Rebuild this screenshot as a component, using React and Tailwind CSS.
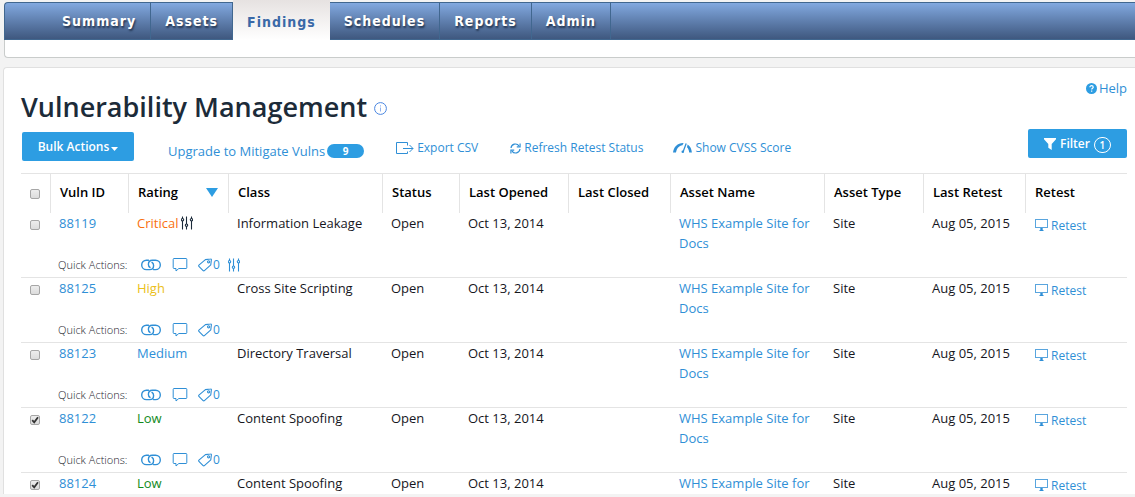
import { useState } from 'react';

const tabs = ['Summary', 'Assets', 'Findings', 'Schedules', 'Reports', 'Admin'];

const columns = [
  { label: 'Vuln ID', width: 'w-[78px]' },
  { label: 'Rating', width: 'w-[100px]', sorted: true },
  { label: 'Class', width: 'w-[154px]' },
  { label: 'Status', width: 'w-[77px]' },
  { label: 'Last Opened', width: 'w-[109px]' },
  { label: 'Last Closed', width: 'w-[102px]' },
  { label: 'Asset Name', width: '' },
  { label: 'Asset Type', width: 'w-[99px]' },
  { label: 'Last Retest', width: 'w-[102px]' },
  { label: 'Retest', width: 'w-[102px]' },
];

const ratingColors = {
  Critical: 'text-[#f9700f]',
  High: 'text-[#ebc01a]',
  Medium: 'text-[#2e8fd8]',
  Low: 'text-[#128a1c]',
};

const vulns = [
  { id: '88119', rating: 'Critical', name: 'Information Leakage', custom: true },
  { id: '88125', rating: 'High', name: 'Cross Site Scripting' },
  { id: '88123', rating: 'Medium', name: 'Directory Traversal' },
  { id: '88122', rating: 'Low', name: 'Content Spoofing' },
  { id: '88124', rating: 'Low', name: 'Content Spoofing' },
];

function SlidersIcon({ className }) {
  return (
    <svg viewBox="0 0 12 14" className={`w-3 h-[14px] ${className}`} fill="none" stroke="currentColor" strokeWidth="1.1" aria-hidden="true">
      <path d="M1.5 0.5v2M1.5 5v8.5M5.5 0.5v7.5M5.5 10.5v3M10.5 0.5v2M10.5 5v8.5" />
      <circle cx="1.5" cy="3.7" r="1.2" />
      <circle cx="5.5" cy="9.2" r="1.2" />
      <circle cx="10.5" cy="3.7" r="1.2" />
    </svg>
  );
}

function LinkIcon() {
  return (
    <svg viewBox="0 0 20 12" className="w-5 h-3" fill="none" stroke="currentColor" strokeWidth="1.4" strokeLinecap="round" aria-hidden="true">
      <path d="M7.5 1.2H5.4a4.7 4.7 0 0 0 0 9.4h3.2c2.4 0 4-1.8 4-4.2 0-1.200-.6-2.300-1.600-3" />
      <path d="M12.5 10.600h2.100a4.7 4.7 0 0 0 0-9.400h-3.200c-2.4 0-4 1.8-4 4.2 0 1.200.6 2.300 1.600 3" />
    </svg>
  );
}

function CommentIcon() {
  return (
    <svg viewBox="0 0 16 14" className="w-4 h-[14px]" fill="none" stroke="currentColor" strokeLinejoin="round" aria-hidden="true">
      <path d="M2 .5h12a.8.8 0 0 1 .8.8v8.4a.8.8 0 0 1-.8.8H6.8L4 13v-2.5H2a.8.8 0 0 1-.8-.8V1.3A.8.8 0 0 1 2 .5z" />
    </svg>
  );
}

function TagIcon() {
  return (
    <svg viewBox="0 0 14 14" className="w-[14px] h-[14px]" fill="none" stroke="currentColor" strokeWidth="1.1" strokeLinejoin="round" aria-hidden="true">
      <path d="M7.4 1.6 12.6 1a.7.7 0 0 1 .8.8l-.6 5L6.4 12.6a.9.9 0 0 1-1.3 0L.9 8.4a.9.9 0 0 1 0-1.3z" />
      <circle cx="10.6" cy="3.8" r="1.1" />
    </svg>
  );
}

function MonitorIcon() {
  return (
    <svg viewBox="0 0 13 14" className="w-[13px] h-[14px]" fill="none" stroke="currentColor" aria-hidden="true">
      <rect x="0.5" y="0.5" width="12" height="8" opacity="0.8" />
      <path d="M6.5 9v2" strokeWidth="2.4" />
      <path d="M4.5 11.5h4" />
    </svg>
  );
}

function ExportIcon() {
  return (
    <svg viewBox="0 0 18 13" className="w-[18px] h-[13px]" fill="none" stroke="currentColor" strokeWidth="1" aria-hidden="true">
      <path d="M11.5 3.5v-3H.5v11h11v-2" />
      <path d="M7 6.5h10M13.5 3l3.5 3.5-3.5 3.5" />
    </svg>
  );
}

function RefreshIcon() {
  return (
    <svg viewBox="0 0 12 12" className="w-[11px] h-[11px]" fill="none" stroke="currentColor" strokeWidth="1.3" aria-hidden="true">
      <path d="M1.1 5.4A4.8 4.8 0 0 1 9.8 3.2M10.9 6.6A4.8 4.8 0 0 1 2.2 8.8" />
      <path d="M11 .6v3.6H7.4M1 11.4V7.8h3.6" />
    </svg>
  );
}

function GaugeIcon() {
  return (
    <svg viewBox="0 0 19 12" className="w-[19px] h-3" aria-hidden="true">
      <path d="M0 10.6C.6 4.6 5 .6 10.6.9L9.4 3.2C6 3.6 3.6 6.4 3 10.6z" fill="currentColor" />
      <path d="M13.2 1.5 10.2 9.4" stroke="currentColor" strokeWidth="1.3" fill="none" />
      <circle cx="9.8" cy="9.8" r="1.3" fill="currentColor" />
      <path d="M14.6 2.4C17.2 4 18.7 7 18.9 10.6h-2.7C16 8.4 15.4 6.6 14 5.2z" fill="currentColor" />
    </svg>
  );
}

function Checkbox(props) {
  return (
    <span className="relative inline-block w-[10px] h-[10px] align-top">
      <input type="checkbox" {...props}
        className="peer block appearance-none w-[10px] h-[10px] rounded-[2px] border border-[#a6a6a6] bg-linear-to-b from-[#ededed] to-[#dcdcdc]" />
      <svg viewBox="0 0 10 10" className="hidden peer-checked:block absolute inset-0 pointer-events-none" fill="none" stroke="#333" strokeWidth="1.8" aria-hidden="true">
        <path d="M2.2 5.2 4.2 7.3 8 2.3" />
      </svg>
    </span>
  );
}

function NavBar() {
  return (
    <header className="ml-1 pt-[2px]">
      <nav className="flex h-[38px] pl-[43px] rounded-tl border-t border-b border-l border-[#41678f] bg-linear-to-b from-[#82a9e0] to-[#3f587f] font-['DejaVu_Sans_Condensed','DejaVu_Sans',sans-serif] font-bold text-[14px] tracking-[1px] leading-9">
        {tabs.map(tab => tab === 'Findings' ? (
          <a key={tab} href="#findings" aria-current="page" className="-mt-[3px] -mb-px pt-1 px-[14px] bg-linear-to-b from-[#e6e2e1] to-white text-[#3a69a8]">{tab}</a>
        ) : (
          <a key={tab} href={`#${tab.toLowerCase()}`} className="px-[14px] border-r border-[#41678f] text-white [text-shadow:1px_2px_2px_#23344f]">{tab}</a>
        ))}
      </nav>
      <div className="h-[18px] border-l border-b border-[#c9cccb] rounded-bl bg-white"></div>
    </header>
  );
}

function Toolbar() {
  return (
    <div className="flex items-start pt-2 h-[52px] text-xs text-[#2f8fd6]">
      <button className="ml-px mt-[3px] w-28 h-[29px] rounded-[2px] bg-[#2d9de2] text-white font-semibold flex items-center justify-center gap-[2px]">
        Bulk Actions
        <svg viewBox="0 0 7 4" className="w-[7px] h-1 mt-1" fill="currentColor" aria-hidden="true"><path d="M0 0h7L3.5 4z" /></svg>
      </button>
      <a href="#upgrade" className="ml-[34px] mt-3 flex items-center gap-[2px] text-[13px] leading-5">
        Upgrade to Mitigate Vulns
        <span className="w-[37px] h-[14px] rounded-full bg-[#2d9de2] text-white text-[10px] leading-[14px] font-bold text-center">9</span>
      </a>
      <a href="#export" className="ml-8 mt-[9px] flex items-center gap-[3px] leading-5"><ExportIcon />Export CSV</a>
      <a href="#refresh" className="ml-8 mt-[9px] flex items-center gap-[3px] leading-5"><RefreshIcon />Refresh Retest Status</a>
      <a href="#cvss" className="ml-[30px] mt-[9px] flex items-center gap-[3px] leading-5"><GaugeIcon />Show CVSS Score</a>
      <button className="ml-auto w-[99px] h-[29px] rounded-[2px] bg-[#2d9de2] text-white font-semibold flex items-center justify-center gap-1">
        <svg viewBox="0 0 12 12" className="w-3 h-3" fill="currentColor" aria-hidden="true"><path d="M0 0h12v1.2L7.7 6v6L4.3 9.8V6L0 1.2z" /></svg>
        Filter
        <span className="w-[17px] h-4 mt-[2px] rounded-full border border-white text-[10px] leading-[14px] text-center">1</span>
      </button>
    </div>
  );
}

function VulnRows({ vuln, checked, onToggle }) {
  return (
    <>
      <tr className="align-top leading-5">
        <td className="pl-[9px] pt-[7px] leading-none"><Checkbox aria-label={`Select ${vuln.id}`} checked={checked} onChange={onToggle} /></td>
        <td className="pl-[9px]"><a href={`#${vuln.id}`} className="text-[#2f8fd6]">{vuln.id}</a></td>
        <td className={`pl-[9px] ${ratingColors[vuln.rating]}`}>
          <span className="flex items-center gap-[3px]">{vuln.rating}{vuln.custom && <SlidersIcon className="text-[#1b2a3a]" />}</span>
        </td>
        <td className="pl-[9px]">{vuln.name}</td>
        <td className="pl-[9px]">Open</td>
        <td className="pl-[9px]">Oct 13, 2014</td>
        <td></td>
        <td className="pl-[9px]"><a href="#asset" className="text-[#2f8fd6]">WHS Example Site for Docs</a></td>
        <td className="pl-[9px]">Site</td>
        <td className="pl-[9px]">Aug 05, 2015</td>
        <td className="pl-[10px] pt-[3px]">
          <a href="#retest" className="flex items-center gap-[3px] text-xs leading-5 text-[#2f8fd6]"><MonitorIcon />Retest</a>
        </td>
      </tr>
      <tr>
        <td className="border-b border-[#e4e4e4]"></td>
        <td colSpan={10} className="h-[25px] pl-2 border-b border-[#e4e4e4]">
          <div className="flex items-center text-[#2f8fd6] h-6">
            <span className="w-[83px] text-[11px] font-light text-[#22222c]">Quick Actions:</span>
            <button aria-label="Link"><LinkIcon /></button>
            <button aria-label="Comment" className="ml-[11px]"><CommentIcon /></button>
            <button aria-label="Tags" className="ml-[10px] flex items-center gap-px text-xs"><TagIcon />0</button>
            {vuln.custom && <button aria-label="Adjust rating" className="ml-2"><SlidersIcon className="" /></button>}
          </div>
        </td>
      </tr>
    </>
  );
}

function VulnTable() {
  const [selected, setSelected] = useState(['88122', '88124']);
  const toggle = id => setSelected(s => s.includes(id) ? s.filter(x => x !== id) : [...s, id]);
  const toggleAll = e => setSelected(e.target.checked ? vulns.map(v => v.id) : []);

  return (
    <table className="w-full table-fixed border-separate border-spacing-0 text-[13px] text-[#16161d]">
      <thead>
        <tr className="text-left text-black">
          <th className="w-[29px] h-10 pl-[9px] pt-1 border-t border-[#e4e4e4] leading-none">
            <Checkbox aria-label="Select all" checked={selected.length === vulns.length} onChange={toggleAll} />
          </th>
          {columns.map(c => (
            <th key={c.label} className={`${c.width} h-10 pl-[9px] pb-[2px] border-t border-l border-[#e4e4e4] font-semibold whitespace-nowrap`}>
              {c.sorted ? (
                <span className="flex items-center justify-between pr-[10px]">
                  {c.label}
                  <svg viewBox="0 0 12 9" className="w-3 h-[9px]" fill="#2d9de2" aria-hidden="true"><path d="M0 0h12L6 9z" /></svg>
                </span>
              ) : c.label}
            </th>
          ))}
        </tr>
      </thead>
      <tbody>
        {vulns.map(v => <VulnRows key={v.id} vuln={v} checked={selected.includes(v.id)} onToggle={() => toggle(v.id)} />)}
      </tbody>
    </table>
  );
}

export default function App() {
  return (
    <div className="h-screen flex flex-col overflow-hidden pb-[3px] bg-[#f3f3f3] font-['Open_Sans',sans-serif]">
      <NavBar />
      <main className="mt-[9px] ml-[3px] flex-1 min-h-0 overflow-hidden pt-3 pl-[17px] pr-2 rounded-tl border-t border-l border-[#e0e0e0] bg-white">
        <div className="flex justify-end">
          <a href="#help" className="flex items-center gap-[2px] text-[13px] leading-4 text-[#2f8fd6]">
            <svg viewBox="0 0 12 12" className="w-[11px] h-[11px]" aria-hidden="true">
              <circle cx="6" cy="6" r="6" fill="#2d9de2" />
              <path d="M4.2 4.7C4.2 2.3 7.9 2.4 7.9 4.6 7.9 5.8 6.2 5.8 6.2 7.2M6.2 8.2v1.4" stroke="#fff" strokeWidth="1.3" fill="none" />
            </svg>
            Help
          </a>
        </div>
        <div className="flex items-center gap-[7px] h-[25px]">
          <h1 className="text-[27px] leading-5 pb-1 font-semibold text-[#1c2b39]">Vulnerability Management</h1>
          <svg viewBox="0 0 13 13" className="w-[13px] h-[13px]" fill="none" stroke="#4a86e0" role="img" aria-label="Info">
            <circle cx="6.5" cy="6.5" r="5.9" />
            <path d="M6.5 5.5v4M6.5 3.3v1.2" stroke="#8fb2ee" />
          </svg>
        </div>
        <Toolbar />
        <VulnTable />
      </main>
    </div>
  );
}
